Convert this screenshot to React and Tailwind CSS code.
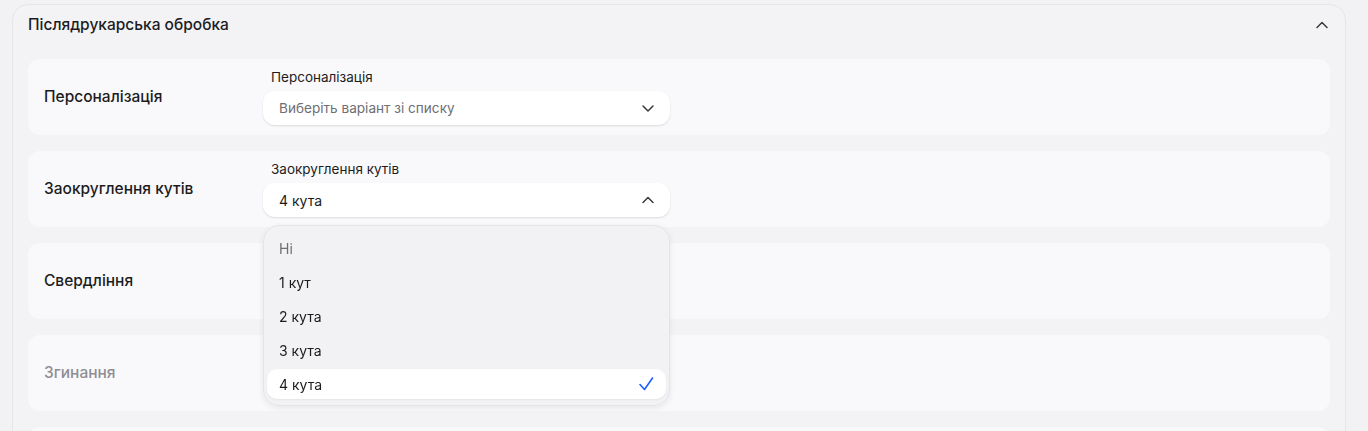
import React from 'react';

const ChevronDown = () => (
  <svg width="14" height="14" viewBox="0 0 14 14" fill="none" stroke="#3a3a3c" strokeWidth="1.5" strokeLinecap="round" strokeLinejoin="round">
    <path d="M2 5l5 5 5-5" />
  </svg>
);

const ChevronUp = () => (
  <svg width="14" height="14" viewBox="0 0 14 14" fill="none" stroke="#3a3a3c" strokeWidth="1.5" strokeLinecap="round" strokeLinejoin="round">
    <path d="M2 9.5l5-5 5 5" />
  </svg>
);

const Check = () => (
  <svg width="16" height="16" viewBox="0 0 16 16" fill="none" stroke="#1f5eff" strokeWidth="1.6" strokeLinecap="round" strokeLinejoin="round">
    <path d="M2 8.5l4.5 5L14.5 2" />
  </svg>
);

const options = ['Ні', '1 кут', '2 кута', '3 кута', '4 кута'];

const App = () => {
  return (
    <div className="min-h-screen w-full bg-[#f2f2f5] pl-3 pr-[22px] pt-1 font-['Inter',sans-serif] text-[#1c1c1e]">
      <div className="rounded-2xl border border-[#e6e6ea] bg-[#f3f3f6] px-[15px]">
        {/* Header */}
        <div className="mb-[14px] flex h-[40px] items-center justify-between pr-[1px]">
          <h2 className="text-[15.5px] font-medium">Післядрукарська обробка</h2>
          <ChevronUp />
        </div>

        <div className="flex flex-col gap-4">
          {/* Персоналізація */}
          <div className="flex h-[76px] items-center rounded-xl bg-[#f9f9fb] px-4">
            <div className="w-[219px] text-[15.5px] font-medium">Персоналізація</div>
            <div className="flex flex-col">
              <span className="mb-[6px] ml-2 text-[13.5px] leading-4">Персоналізація</span>
              <div className="flex h-[34px] w-[407px] items-center justify-between rounded-xl bg-white pl-4 pr-[15px] shadow-[0_1px_2px_rgba(0,0,0,0.12)]">
                <span className="text-[13.6px] text-[#6e6e73]">Виберіть варіант зі списку</span>
                <ChevronDown />
              </div>
            </div>
          </div>

          {/* Заокруглення кутів */}
          <div className="relative z-10 flex h-[76px] items-center rounded-xl bg-[#f9f9fb] px-4">
            <div className="w-[219px] text-[15.5px] font-medium">Заокруглення кутів</div>
            <div className="relative flex flex-col">
              <span className="mb-[6px] ml-2 text-[13.5px] leading-4">Заокруглення кутів</span>
              <div className="flex h-[34px] w-[407px] items-center justify-between rounded-xl bg-white pl-4 pr-[15px] shadow-[0_1px_2px_rgba(0,0,0,0.12)]">
                <span className="text-[14px]">4 кута</span>
                <ChevronUp />
              </div>

              {/* Dropdown */}
              <div className="absolute left-0 top-[64px] flex w-[407px] flex-col gap-[4px] rounded-2xl border border-[#e4e4e8] bg-[#f1f1f4]/95 px-[3px] pb-[6px] pt-[7px] shadow-[0_2px_6px_rgba(0,0,0,0.08)] backdrop-blur">
                {options.map((opt, i) => {
                  const selected = i === options.length - 1;
                  return (
                    <div
                      key={opt}
                      className={`flex h-[30px] items-center justify-between rounded-[10px] pl-[12px] pr-[12px] text-[14px] ${
                        selected ? 'bg-white shadow-[0_1px_2px_rgba(0,0,0,0.06)]' : ''
                      } ${i === 0 ? 'text-[#6e6e73]' : ''}`}
                    >
                      <span>{opt}</span>
                      {selected && <Check />}
                    </div>
                  );
                })}
              </div>
            </div>
          </div>

          {/* Свердління */}
          <div className="flex h-[76px] items-center rounded-xl bg-[#f9f9fb] px-4">
            <div className="w-[219px] text-[15.5px] font-medium">Свердління</div>
          </div>

          {/* Згинання */}
          <div className="flex h-[76px] items-center rounded-xl bg-[#f9f9fb] px-4">
            <div className="w-[219px] text-[15.5px] font-medium text-[#8e8e93]">Згинання</div>
          </div>

          <div className="h-[76px] rounded-xl bg-[#f9f9fb]" />
        </div>
      </div>
    </div>
  );
};

export default App;
